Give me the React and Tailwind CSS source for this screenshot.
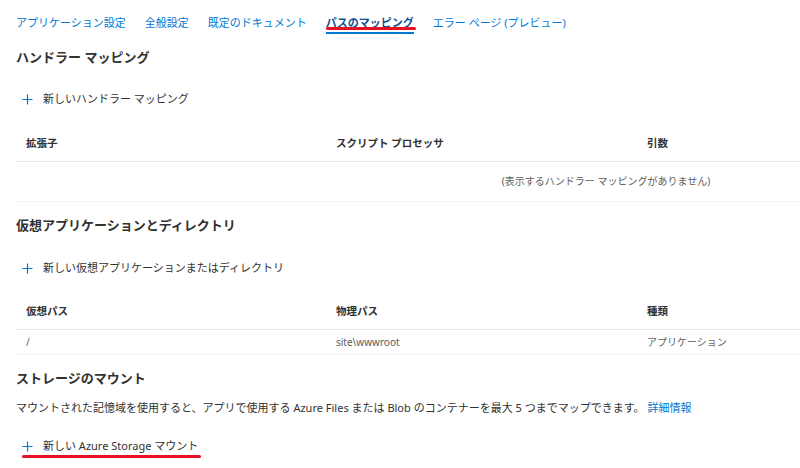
import React from "react";

const font = { fontFamily: '"Noto Sans", "Noto Sans CJK JP", sans-serif' };

function Plus() {
  return (
    <svg width="11" height="11" viewBox="0 0 11 11" className="shrink-0">
      <path d="M5.5 0.5V10.5M0.5 5.5H10.5" stroke="#0078d4" strokeWidth="1.2" fill="none" />
    </svg>
  );
}

function AddButton({ children }) {
  return (
    <div className="flex items-center h-[20px] pl-[22px] gap-[10px] text-[11px] text-[#323130]">
      <Plus />
      <span className="leading-[20px]">{children}</span>
    </div>
  );
}

function Heading({ children, className = "" }) {
  return (
    <div className={"h-[20px] leading-[20px] pl-[16px] text-[13px] font-bold text-[#323130] " + className}>
      {children}
    </div>
  );
}

const tabs = [
  "アプリケーション設定",
  "全般設定",
  "既定のドキュメント",
  "パスのマッピング",
  "エラー ページ (プレビュー)",
];

export default function App() {
  return (
    <div className="w-[800px] h-[468px] overflow-hidden bg-white" style={font}>
      {/* Tabs */}
      <div className="flex gap-[19px] pl-[16px] h-[34px]">
        {tabs.map((t, i) =>
          i === 3 ? (
            <div key={t} className="relative h-[34px] pt-[9px] border-b-2 border-[#0078d4]">
              <span className="text-[11px] leading-[16px] font-bold text-[#0f5396] whitespace-nowrap">{t}</span>
              <div className="absolute left-0 right-[-2px] top-[27px] h-[3px] rounded-full bg-[#e81123]" />
            </div>
          ) : (
            <div key={t} className="h-[34px] pt-[9px]">
              <span className="text-[11px] leading-[16px] text-[#0078d4] whitespace-nowrap">{t}</span>
            </div>
          )
        )}
      </div>

      {/* Handler mappings */}
      <Heading className="mt-[13px]">ハンドラー マッピング</Heading>
      <div className="mt-[22px]">
        <AddButton>新しいハンドラー マッピング</AddButton>
      </div>
      <div className="ml-[16px] mt-[18px] w-[1180px]">
        <div className="grid grid-cols-[310px_311px_1fr] h-[35px] items-center border-b border-[#e3e6ed] text-[10.5px] font-semibold text-[#323130]">
          <div className="px-[10px]">拡張子</div>
          <div className="px-[10px]">スクリプト プロセッサ</div>
          <div className="px-[10px]">引数</div>
        </div>
        <div className="flex justify-center items-center h-[40px] border-b border-[#f3f2f1] text-[10px] text-[#605e5c]">
          (表示するハンドラー マッピングがありません)
        </div>
      </div>

      {/* Virtual apps */}
      <Heading className="mt-[13px]">仮想アプリケーションとディレクトリ</Heading>
      <div className="mt-[23px]">
        <AddButton>新しい仮想アプリケーションまたはディレクトリ</AddButton>
      </div>
      <div className="ml-[16px] mt-[17px]">
        <div className="grid grid-cols-[310px_311px_1fr] h-[35px] items-center border-b border-[#e3e6ed] text-[10.5px] font-semibold text-[#323130]">
          <div className="px-[10px]">仮想パス</div>
          <div className="px-[10px]">物理パス</div>
          <div className="px-[10px]">種類</div>
        </div>
        <div className="grid grid-cols-[310px_311px_1fr] h-[25px] items-center border-b border-[#f3f2f1] text-[10px] text-[#605e5c]">
          <div className="px-[10px]">/</div>
          <div className="px-[10px]">site\wwwroot</div>
          <div className="px-[10px]">アプリケーション</div>
        </div>
      </div>

      {/* Storage mounts */}
      <Heading className="mt-[13px]">ストレージのマウント</Heading>
      <div className="mt-[10px] pl-[16px] h-[20px] leading-[20px] text-[11px] text-[#323130] whitespace-nowrap">
        マウントされた記憶域を使用すると、アプリで使用する Azure Files または Blob のコンテナーを最大 5 つまでマップできます。{" "}
        <span className="text-[#0078d4]">詳細情報</span>
      </div>
      <div className="mt-[18px] relative">
        <AddButton>新しい Azure Storage マウント</AddButton>
        <div className="absolute left-[22px] w-[179px] top-[19px] h-[3px] rounded-full bg-[#e81123]" />
      </div>
    </div>
  );
}
